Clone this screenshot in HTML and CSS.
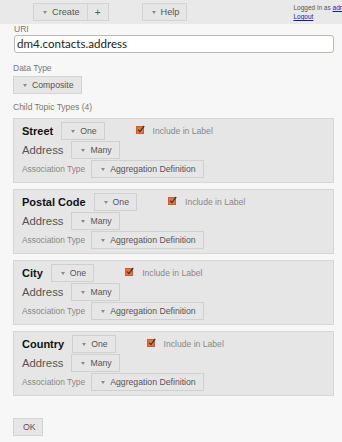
FILE: index.html
```html
<!DOCTYPE html>
<html>
<head>
<meta charset="utf-8">
<link rel="stylesheet" href="styles.css">
</head>
<body>
<div class="topbar">
  <div class="edge"></div>
  <div class="btn-group create">
    <span class="btn"><span class="tri"></span>Create</span><span class="btn plus">+</span>
  </div>
  <span class="btn help"><span class="tri"></span>Help</span>
  <div class="login">
    <div>Logged in as <a href="#">admin</a></div>
    <div><a href="#">Logout</a></div>
  </div>
</div>
<div class="content">
  <div class="field-label">URI</div>
  <div class="input">dm4.contacts.address</div>
  <div class="field-label datatype">Data Type</div>
  <span class="btn composite"><span class="tri"></span>Composite</span>
  <div class="field-label child">Child Topic Types (4)</div>

  <div class="boxes">
    <div class="box">
      <div class="row">
        <span class="name">Street</span>
        <span class="btn"><span class="tri"></span>One</span>
        <span class="check"><svg width="9" height="9" viewBox="0 0 9 9"><rect x="0.5" y="1.5" width="7" height="7" fill="#e8733c" stroke="#cc5e2c"/><polyline points="2,4.6 3.9,6.6 8.2,1" fill="none" stroke="#3a3a3a" stroke-width="1.3"/></svg></span>
        <span class="incl">Include in Label</span>
      </div>
      <div class="row">
        <span class="parent">Address</span>
        <span class="btn"><span class="tri"></span>Many</span>
      </div>
      <div class="row">
        <span class="assoc">Association Type</span>
        <span class="btn"><span class="tri"></span>Aggregation Definition</span>
      </div>
    </div>

    <div class="box">
      <div class="row">
        <span class="name">Postal Code</span>
        <span class="btn"><span class="tri"></span>One</span>
        <span class="check"><svg width="9" height="9" viewBox="0 0 9 9"><rect x="0.5" y="1.5" width="7" height="7" fill="#e8733c" stroke="#cc5e2c"/><polyline points="2,4.6 3.9,6.6 8.2,1" fill="none" stroke="#3a3a3a" stroke-width="1.3"/></svg></span>
        <span class="incl">Include in Label</span>
      </div>
      <div class="row">
        <span class="parent">Address</span>
        <span class="btn"><span class="tri"></span>Many</span>
      </div>
      <div class="row">
        <span class="assoc">Association Type</span>
        <span class="btn"><span class="tri"></span>Aggregation Definition</span>
      </div>
    </div>

    <div class="box">
      <div class="row">
        <span class="name">City</span>
        <span class="btn"><span class="tri"></span>One</span>
        <span class="check"><svg width="9" height="9" viewBox="0 0 9 9"><rect x="0.5" y="1.5" width="7" height="7" fill="#e8733c" stroke="#cc5e2c"/><polyline points="2,4.6 3.9,6.6 8.2,1" fill="none" stroke="#3a3a3a" stroke-width="1.3"/></svg></span>
        <span class="incl">Include in Label</span>
      </div>
      <div class="row">
        <span class="parent">Address</span>
        <span class="btn"><span class="tri"></span>Many</span>
      </div>
      <div class="row">
        <span class="assoc">Association Type</span>
        <span class="btn"><span class="tri"></span>Aggregation Definition</span>
      </div>
    </div>

    <div class="box">
      <div class="row">
        <span class="name">Country</span>
        <span class="btn"><span class="tri"></span>One</span>
        <span class="check"><svg width="9" height="9" viewBox="0 0 9 9"><rect x="0.5" y="1.5" width="7" height="7" fill="#e8733c" stroke="#cc5e2c"/><polyline points="2,4.6 3.9,6.6 8.2,1" fill="none" stroke="#3a3a3a" stroke-width="1.3"/></svg></span>
        <span class="incl">Include in Label</span>
      </div>
      <div class="row">
        <span class="parent">Address</span>
        <span class="btn"><span class="tri"></span>Many</span>
      </div>
      <div class="row">
        <span class="assoc">Association Type</span>
        <span class="btn"><span class="tri"></span>Aggregation Definition</span>
      </div>
    </div>
  </div>

  <span class="btn ok">OK</span>
</div>
</body>
</html>
```
FILE: styles.css
```css
html, body {
  margin: 0;
  padding: 0;
  background: #f7f7f7;
  font-family: "Liberation Sans", Arial, sans-serif;
  overflow: hidden;
}

.topbar {
  height: 24px;
  background: #e9e9e9;
  display: flex;
  align-items: flex-start;
  overflow: hidden;
  white-space: nowrap;
}

.edge {
  width: 1px;
  height: 22px;
  background: #cfcfcf;
}

.btn {
  display: inline-flex;
  align-items: center;
  box-sizing: border-box;
  height: 18px;
  padding: 0 7px 0 9px;
  border: 1px solid #d3d3d3;
  background: #e6e6e6;
  color: #555;
  font-size: 8.7px;
  white-space: nowrap;
}

.tri {
  width: 0;
  height: 0;
  border-left: 2.5px solid transparent;
  border-right: 2.5px solid transparent;
  border-top: 3px solid #8a8a8a;
  margin-right: 5px;
}

.btn-group {
  display: flex;
  margin-top: 3px;
}

.create {
  margin-left: 33px;
}

.create .btn:first-child {
  font-size: 9.2px;
}

.plus {
  border-left: none;
  padding: 0 8px;
  font-size: 10px;
  width: 21px;
  justify-content: center;
}

.help {
  margin-top: 3px;
  margin-left: 33px;
  width: 46px;
  font-size: 9.2px;
}

.login {
  margin-left: 106px;
  padding-top: 3px;
  font-size: 6.5px;
  line-height: 9px;
  color: #555;
}

.login a {
  color: #1a1aa6;
  text-decoration: underline;
}

.content {
  padding: 0 8px 0 13px;
}

.field-label {
  font-size: 8.5px;
  line-height: 11px;
  color: #777;
}

.field-label:first-child {
  padding-left: 1px;
}

.input {
  box-sizing: border-box;
  height: 18px;
  margin-left: 1px;
  width: 320px;
  border: 1px solid #bdb8b2;
  border-radius: 3px;
  background: #fff;
  padding: 0 2px;
  font-family: Lato, "Open Sans", sans-serif;
  font-size: 11.6px;
  line-height: 16px;
  color: #222;
}

.datatype {
  margin-top: 10px;
  margin-bottom: 2px;
}

.composite {
  display: flex;
  width: 69px;
}

.child {
  margin-top: 8px;
  margin-bottom: 5px;
}

.boxes {
  display: flex;
  flex-direction: column;
  gap: 6px;
}

.box {
  box-sizing: border-box;
  height: 65px;
  border: 1px solid #d6d6d6;
  background: #e6e6e6;
  padding: 3px 8px 4px 8px;
  display: flex;
  flex-direction: column;
  gap: 1px;
}

.row {
  display: flex;
  align-items: center;
  height: 18px;
}

.box .btn {
  border-color: #d0d0d0;
}

.name {
  font-weight: bold;
  font-size: 11px;
  color: #111;
  margin-right: 8px;
}

.parent {
  font-size: 11.3px;
  color: #555;
  margin-right: 8px;
}

.assoc {
  font-size: 8.4px;
  color: #888;
  margin-right: 6px;
}

.check {
  display: flex;
  margin-left: 31px;
  margin-top: -3px;
}

.incl {
  margin-left: 8px;
  font-size: 8.6px;
  color: #888;
}

.ok {
  display: flex;
  width: 30px;
  margin-top: 22px;
  padding: 0 0 0 9px;
}
```
